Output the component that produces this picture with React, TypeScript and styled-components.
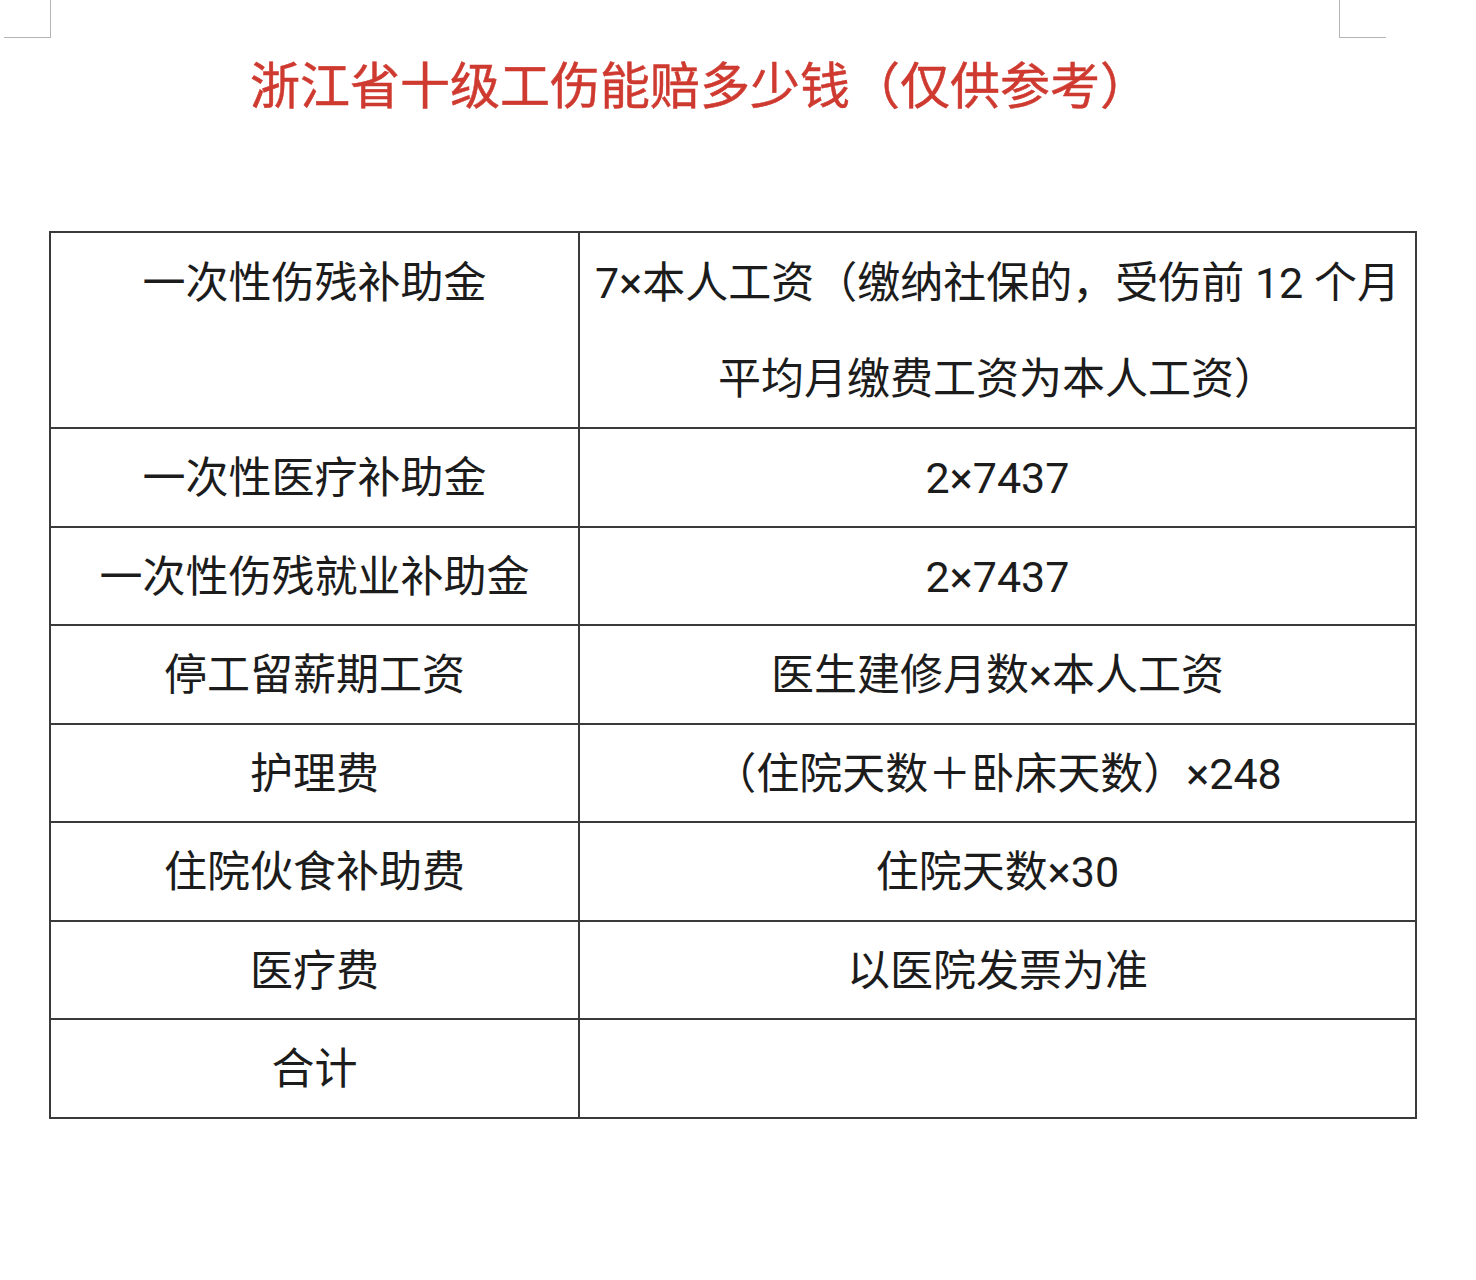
import styled, { createGlobalStyle } from "styled-components";

// GLOBAL ----------------------------------->

const GlobalStyle = createGlobalStyle`
  html, body {
    margin: 0;
    padding: 0;
    background: #ffffff;
  }
  body {
    font-family: Roboto, "Noto Sans CJK SC", sans-serif;
    color: #1c1c1c;
  }
`;

// STYLED COMPONENTS ----------------------------------->

const Page = styled.div`
  width: 1476px;
  min-height: 1280px;
  background: #ffffff;
`;

const CornerBar = styled.div`
  display: flex;
  justify-content: space-between;
  padding: 0 90px 0 4px;
`;

const Corner = styled.div<{ $side: "left" | "right" }>`
  width: 46px;
  height: 37px;
  border-bottom: 1.5px solid #b4b4b4;
  ${({ $side }) =>
    $side === "left"
      ? "border-right: 1.5px solid #b4b4b4;"
      : "border-left: 1.5px solid #b4b4b4;"}
`;

const Title = styled.h1`
  margin: 12px 0 0 250px;
  font-family: "Noto Sans CJK SC", sans-serif;
  font-size: 50px;
  line-height: 64px;
  font-weight: 400;
  color: #cf3a30;
  -webkit-text-stroke: 0.5px #cf3a30;
`;

const Table = styled.table`
  margin: 117px 0 0 49px;
  width: 1366px;
  border-collapse: collapse;
  table-layout: fixed;
  border: 2px solid #3a3a3a;
`;

const Cell = styled.td<{ $top?: boolean }>`
  border: 2px solid #3a3a3a;
  padding: ${({ $top }) => ($top ? "2px 8px 0" : "3px 8px 1px")};
  text-align: center;
  vertical-align: ${({ $top }) => ($top ? "top" : "middle")};
  font-size: 43px;
  line-height: ${({ $top }) => ($top ? "96px" : "92.5px")};
  white-space: nowrap;
  color: #1c1c1c;
`;

const Line = styled.div`
  line-height: 96px;
`;

// DATA ----------------------------------->

const rows: [string, string][] = [
  ["一次性医疗补助金", "2×7437"],
  ["一次性伤残就业补助金", "2×7437"],
  ["停工留薪期工资", "医生建修月数×本人工资"],
  ["护理费", "（住院天数＋卧床天数）×248"],
  ["住院伙食补助费", "住院天数×30"],
  ["医疗费", "以医院发票为准"],
  ["合计", ""],
];

// COMPONENT ----------------------------------->

const App = () => {
  return (
    <>
      <GlobalStyle />
      <Page>
        <CornerBar>
          <Corner $side="left" />
          <Corner $side="right" />
        </CornerBar>
        <Title>浙江省十级工伤能赔多少钱（仅供参考）</Title>
        <Table>
          <colgroup>
            <col style={{ width: 529 }} />
            <col style={{ width: 837 }} />
          </colgroup>
          <tbody>
            <tr>
              <Cell $top>一次性伤残补助金</Cell>
              <Cell $top>
                <Line>7×本人工资（缴纳社保的，受伤前 12 个月</Line>
                <Line>平均月缴费工资为本人工资）</Line>
              </Cell>
            </tr>
            {rows.map(([label, value], idx) => (
              <tr key={idx}>
                <Cell>{label}</Cell>
                <Cell>{value}</Cell>
              </tr>
            ))}
          </tbody>
        </Table>
      </Page>
    </>
  );
};

export default App;
